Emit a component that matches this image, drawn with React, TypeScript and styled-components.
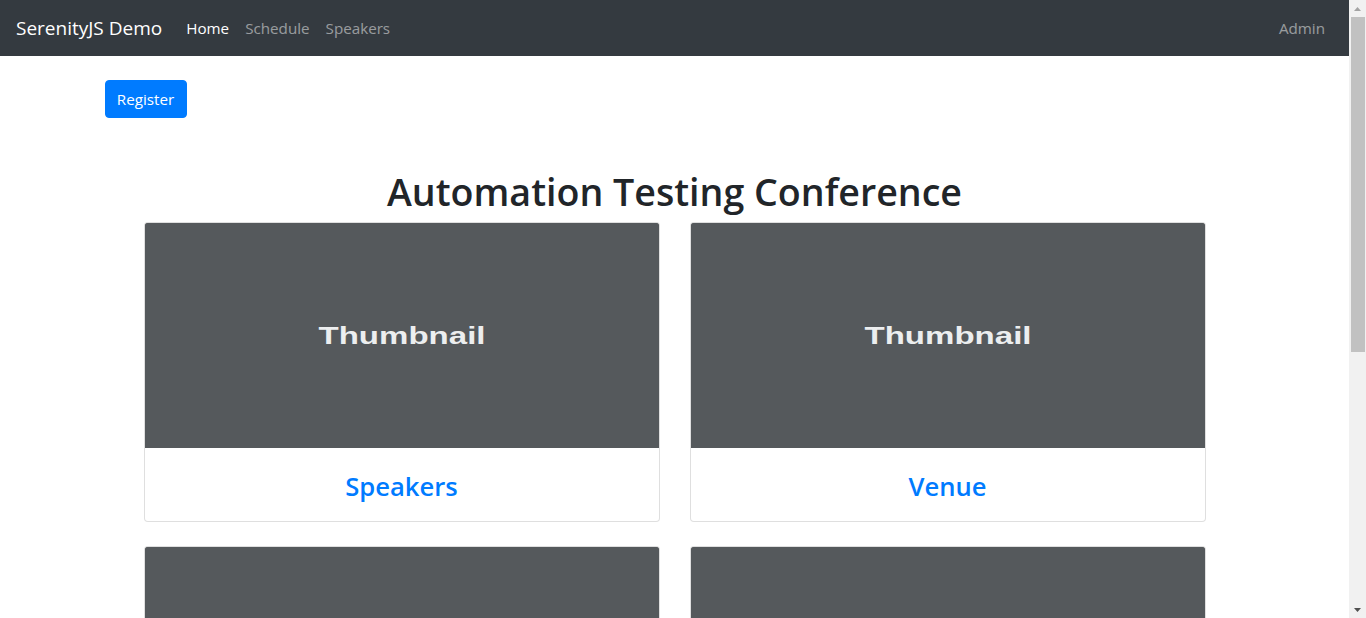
import React from "react";
import styled, { createGlobalStyle } from "styled-components";

const Global = createGlobalStyle`
  html, body { margin: 0; padding: 0; }
  body {
    font-family: "Open Sans", "Noto Sans", "Liberation Sans", sans-serif;
    font-size: 15.2px;
    line-height: 1.5;
    color: #212529;
    background: #fff;
    overflow: hidden;
  }
  * { box-sizing: border-box; }
`;

const Shell = styled.div`
  display: flex;
  height: 100vh;
  overflow: hidden;
`;

const Viewport = styled.div`
  flex: 1;
  min-width: 0;
  overflow: hidden;
`;

const ScrollBar = styled.div`
  width: 17px;
  flex: none;
  display: flex;
  flex-direction: column;
  background: #f1f1f1;
`;

const ScrollButton = styled.div`
  height: 17px;
  display: flex;
  align-items: center;
  justify-content: center;
`;

const Track = styled.div`
  flex: 1;
  padding: 0 1px 0 2px;
`;

const ScrollThumb = styled.div`
  height: 335px;
  background: #c1c1c1;
`;

const Navbar = styled.nav`
  height: 56px;
  background: #343a40;
  display: flex;
  align-items: center;
  padding: 8px 16px;
`;

const Brand = styled.a`
  font-size: 19px;
  line-height: 30px;
  color: #fff;
  margin-right: 16px;
  text-decoration: none;
  white-space: nowrap;
`;

const NavList = styled.div`
  display: flex;
  flex: 1;
  align-items: center;
`;

const NavLink = styled.a<{ $active?: boolean; $right?: boolean }>`
  padding: 8px;
  font-size: 15.2px;
  line-height: 24px;
  color: ${(p) => (p.$active ? "#fff" : "rgba(255,255,255,0.5)")};
  text-decoration: none;
  margin-left: ${(p) => (p.$right ? "auto" : "0")};
`;

const Container = styled.main`
  width: 1140px;
  margin: 0 auto;
  padding-bottom: 231px;
`;

const RegisterBar = styled.div`
  margin-top: 24px;
  display: flex;
`;

const Button = styled.button`
  height: 38px;
  width: 82px;
  padding: 6px 0;
  background: #007bff;
  color: #fff;
  border: 1px solid #007bff;
  border-radius: 4px;
  font-family: inherit;
  font-size: 15.2px;
  line-height: 24px;
  cursor: pointer;
`;

const Title = styled.h1`
  margin: 50px 0 6px;
  text-align: center;
  font-size: 37.6px;
  line-height: 48px;
  font-weight: 600;
  color: #212529;
`;

const Grid = styled.div`
  width: 1062px;
  margin: 0 auto;
  display: grid;
  grid-template-columns: 1fr 1fr;
  column-gap: 30px;
  row-gap: 24px;
`;

const Card = styled.div`
  border: 1px solid rgba(0, 0, 0, 0.125);
  border-radius: 4px;
  overflow: hidden;
  background: #fff;
`;

const Thumb = styled.svg`
  display: block;
  width: 100%;
  height: 225px;
  background: #55595c;
`;

const CardBody = styled.div`
  padding: 22px 20px 18px;
  text-align: center;
`;

const CardTitle = styled.a`
  display: block;
  font-size: 25.6px;
  line-height: 33px;
  font-weight: 600;
  color: #007bff;
  text-decoration: none;
`;

const cards = ["Speakers", "Venue", "Schedule", "Sponsors"];

export default function App() {
  return (
    <>
      <Global />
      <Shell>
        <Viewport>
          <Navbar>
            <Brand href="#">SerenityJS Demo</Brand>
            <NavList>
              <NavLink $active href="#">Home</NavLink>
              <NavLink href="#">Schedule</NavLink>
              <NavLink href="#">Speakers</NavLink>
              <NavLink $right href="#">Admin</NavLink>
            </NavList>
          </Navbar>
          <Container>
            <RegisterBar>
              <Button>Register</Button>
            </RegisterBar>
            <Title>Automation Testing Conference</Title>
            <Grid>
              {cards.map((c) => (
                <Card key={c}>
                  <Thumb viewBox="0 0 514 225" preserveAspectRatio="none">
                    <rect width="514" height="225" fill="#55595c" />
                    <text
                      x="257"
                      y="120.5"
                      textAnchor="middle"
                      fill="#eceeef"
                      fontFamily="'Liberation Sans', Arial, sans-serif"
                      fontWeight="bold"
                      fontSize="24"
                      textLength="167"
                      lengthAdjust="spacingAndGlyphs"
                    >
                      Thumbnail
                    </text>
                  </Thumb>
                  <CardBody>
                    <CardTitle href="#">{c}</CardTitle>
                  </CardBody>
                </Card>
              ))}
            </Grid>
          </Container>
        </Viewport>
        <ScrollBar>
          <ScrollButton>
            <svg width="7" height="4" viewBox="0 0 7 4">
              <path d="M0 4 L3.5 0 L7 4 Z" fill="#a3a3a3" />
            </svg>
          </ScrollButton>
          <Track>
            <ScrollThumb />
          </Track>
          <ScrollButton>
            <svg width="7" height="4" viewBox="0 0 7 4">
              <path d="M0 0 L7 0 L3.5 4 Z" fill="#505050" />
            </svg>
          </ScrollButton>
        </ScrollBar>
      </Shell>
    </>
  );
}
